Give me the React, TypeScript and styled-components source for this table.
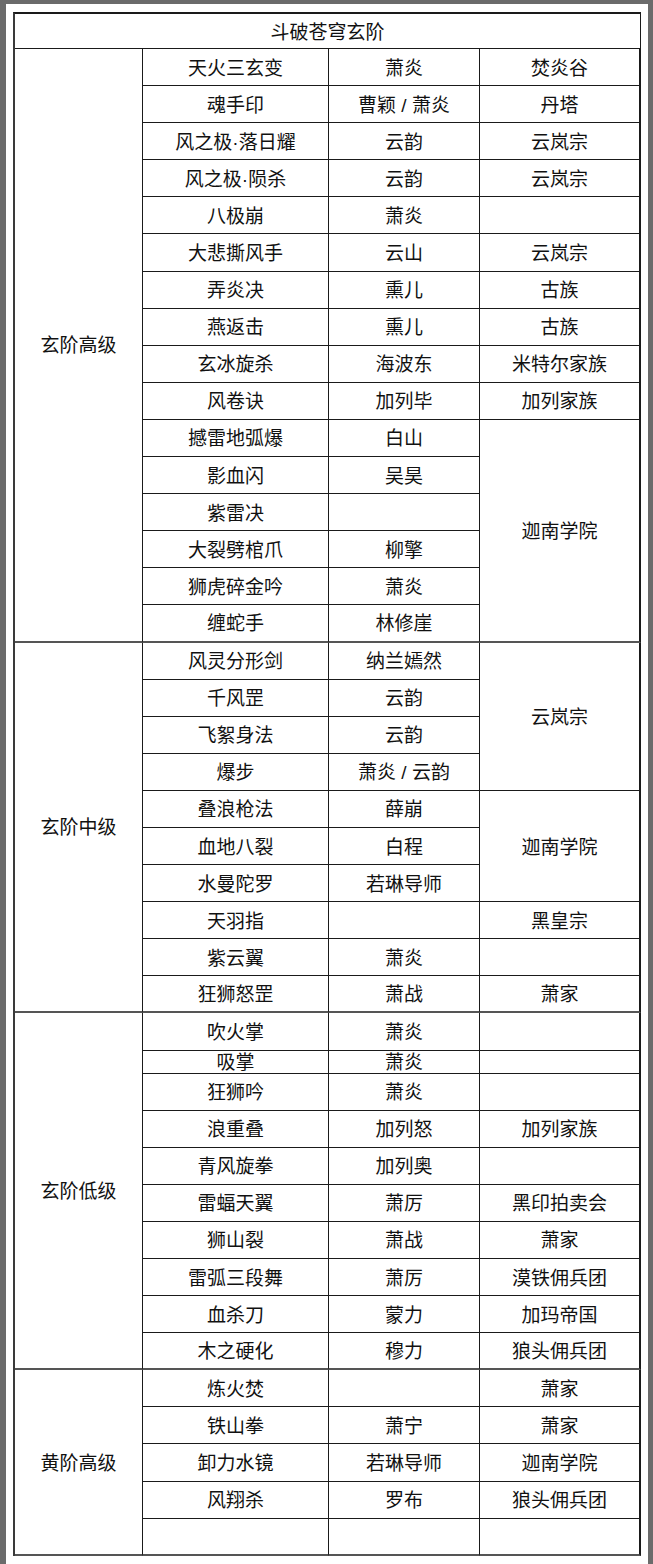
import React from 'react'
import styled, { createGlobalStyle } from 'styled-components'

const GlobalStyle = createGlobalStyle`
  html, body {
    margin: 0;
    padding: 0;
    background: #6b6b6b;
  }
  body {
    font-family: "Liberation Sans", "Noto Sans CJK SC", sans-serif;
  }
`

const Page = styled.div`
  margin: 4px 5px 0 6px;
  padding: 8px 0 9px 7px;
  width: 642px;
  box-sizing: border-box;
  background: #ffffff;
`

const Sheet = styled.div<{ $rows: string }>`
  display: grid;
  grid-template-columns: 128px 186px 151px 161px;
  grid-template-rows: ${p => p.$rows};
  border-left: 2px solid #3a3a3a;
  border-top: 2px solid #1a1a1a;
  width: 628px;
  box-sizing: border-box;
`

const Cell = styled.div<{ $col: number; $row: number; $span?: number; $groupEnd?: boolean }>`
  grid-column: ${p => p.$col};
  grid-row: ${p => p.$row} / span ${p => p.$span ?? 1};
  display: flex;
  align-items: center;
  justify-content: center;
  box-sizing: border-box;
  padding-top: 2px;
  border-right: ${p => (p.$col === 4 ? '2px solid #1a1a1a' : '1px solid #1a1a1a')};
  border-bottom: ${p => (p.$groupEnd ? '2px solid #555555' : '1px solid #1a1a1a')};
  font-family: "Liberation Sans", "Noto Sans CJK SC", sans-serif;
  font-size: 19px;
  line-height: 1;
  color: #111111;
  white-space: nowrap;
`

const Title = styled(Cell)`
  grid-column: 1 / -1;
`

type Row = { skill: string; person: string; h?: number }
type Group = { label: string; rows: Row[]; sects: [string, number][] }

const r = (skill: string, person = '', h?: number): Row => ({ skill, person, h })

const groups: Group[] = [
  {
    label: '玄阶高级',
    rows: [
      r('天火三玄变', '萧炎'),
      r('魂手印', '曹颖 / 萧炎'),
      r('风之极·落日耀', '云韵'),
      r('风之极·陨杀', '云韵'),
      r('八极崩', '萧炎'),
      r('大悲撕风手', '云山'),
      r('弄炎决', '熏儿'),
      r('燕返击', '熏儿'),
      r('玄冰旋杀', '海波东'),
      r('风卷诀', '加列毕'),
      r('撼雷地弧爆', '白山'),
      r('影血闪', '吴昊'),
      r('紫雷决'),
      r('大裂劈棺爪', '柳擎'),
      r('狮虎碎金吟', '萧炎'),
      r('缠蛇手', '林修崖'),
    ],
    sects: [
      ['焚炎谷', 1],
      ['丹塔', 1],
      ['云岚宗', 1],
      ['云岚宗', 1],
      ['', 1],
      ['云岚宗', 1],
      ['古族', 1],
      ['古族', 1],
      ['米特尔家族', 1],
      ['加列家族', 1],
      ['迦南学院', 6],
    ],
  },
  {
    label: '玄阶中级',
    rows: [
      r('风灵分形剑', '纳兰嫣然'),
      r('千风罡', '云韵'),
      r('飞絮身法', '云韵'),
      r('爆步', '萧炎 / 云韵'),
      r('叠浪枪法', '薛崩'),
      r('血地八裂', '白程'),
      r('水曼陀罗', '若琳导师'),
      r('天羽指'),
      r('紫云翼', '萧炎'),
      r('狂狮怒罡', '萧战'),
    ],
    sects: [
      ['云岚宗', 4],
      ['迦南学院', 3],
      ['黑皇宗', 1],
      ['', 1],
      ['萧家', 1],
    ],
  },
  {
    label: '玄阶低级',
    rows: [
      r('吹火掌', '萧炎'),
      r('吸掌', '萧炎', 23),
      r('狂狮吟', '萧炎'),
      r('浪重叠', '加列怒'),
      r('青风旋拳', '加列奥'),
      r('雷蝠天翼', '萧厉'),
      r('狮山裂', '萧战'),
      r('雷弧三段舞', '萧厉'),
      r('血杀刀', '蒙力'),
      r('木之硬化', '穆力'),
    ],
    sects: [
      ['', 1],
      ['', 1],
      ['', 1],
      ['加列家族', 1],
      ['', 1],
      ['黑印拍卖会', 1],
      ['萧家', 1],
      ['漠铁佣兵团', 1],
      ['加玛帝国', 1],
      ['狼头佣兵团', 1],
    ],
  },
  {
    label: '黄阶高级',
    rows: [
      r('炼火焚'),
      r('铁山拳', '萧宁'),
      r('卸力水镜', '若琳导师'),
      r('风翔杀', '罗布'),
      r(''),
    ],
    sects: [
      ['萧家', 1],
      ['萧家', 1],
      ['迦南学院', 1],
      ['狼头佣兵团', 1],
      ['', 1],
    ],
  },
]

const ROW_H = 37.1

export default function App() {
  const tracks = ['35px']
  const cells: React.ReactNode[] = []
  let start = 2

  groups.forEach((g, gi) => {
    const n = g.rows.length
    const last = start + n - 1
    cells.push(
      <Cell key={`l${gi}`} $col={1} $row={start} $span={n} $groupEnd>
        {g.label}
      </Cell>
    )
    g.rows.forEach((row, ri) => {
      const at = start + ri
      tracks.push(`${row.h ?? ROW_H}px`)
      cells.push(
        <Cell key={`s${gi}-${ri}`} $col={2} $row={at} $groupEnd={at === last}>
          {row.skill}
        </Cell>,
        <Cell key={`p${gi}-${ri}`} $col={3} $row={at} $groupEnd={at === last}>
          {row.person}
        </Cell>
      )
    })
    let at = start
    g.sects.forEach(([name, span], si) => {
      cells.push(
        <Cell key={`c${gi}-${si}`} $col={4} $row={at} $span={span} $groupEnd={at + span - 1 === last}>
          {name}
        </Cell>
      )
      at += span
    })
    start += n
  })

  return (
    <>
      <GlobalStyle />
      <Page>
        <Sheet $rows={tracks.join(' ')}>
          <Title $col={1} $row={1}>斗破苍穹玄阶</Title>
          {cells}
        </Sheet>
      </Page>
    </>
  )
}
